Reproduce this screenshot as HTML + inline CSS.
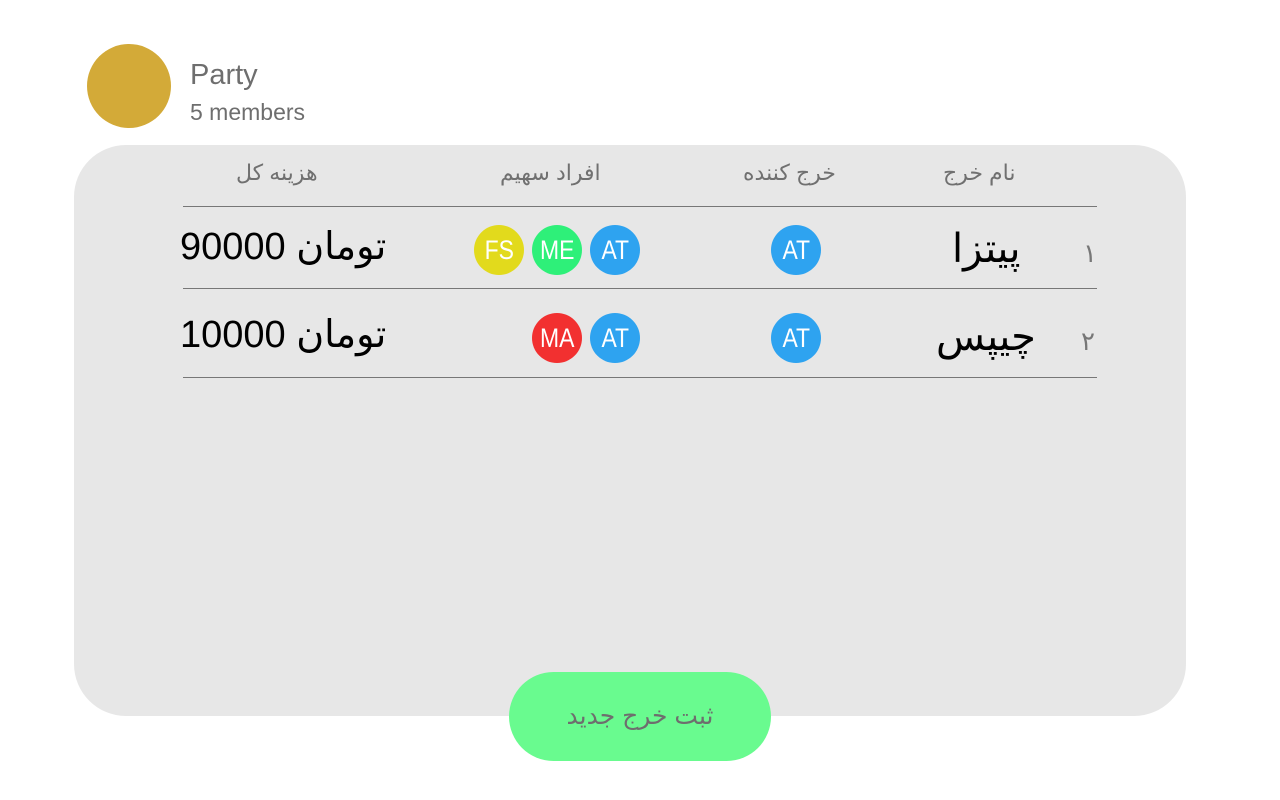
<!DOCTYPE html><html><head><meta charset="utf-8"><style>
body{margin:0;width:1280px;height:800px;background:#fff;position:relative;overflow:hidden;font-family:"Liberation Sans","DejaVu Sans",sans-serif}
.a{position:absolute}
.c{position:absolute;width:50px;height:50px;border-radius:50%;color:#fff;font-size:27px;line-height:50px;text-align:center}
.c span{display:inline-block;transform:scaleX(0.85)}
.h{position:absolute;top:160px;font-size:22px;color:#707070;white-space:nowrap;direction:rtl}
.line{position:absolute;left:183px;width:914px;height:1px;background:#777}
.t{position:absolute;font-size:38px;color:#000;white-space:nowrap;direction:rtl}
.n{position:absolute;font-size:26px;color:#777}
</style></head><body>
<div class="a" style="left:87px;top:44px;width:84px;height:84px;border-radius:50%;background:#d3aa38"></div>
<div class="a" style="left:190px;top:59px;font-size:29px;color:#6e6e6e">Party</div>
<div class="a" style="left:190px;top:99px;font-size:23px;color:#6e6e6e">5 members</div>
<div class="a" style="left:74px;top:145px;width:1112px;height:571px;border-radius:52px;background:#e7e7e7"></div>
<div class="h" style="left:236px">هزینه کل</div>
<div class="h" style="left:500px">افراد سهیم</div>
<div class="h" style="left:743px">خرج کننده</div>
<div class="h" style="left:943px">نام خرج</div>
<div class="line" style="top:206px"></div>
<div class="line" style="top:288px"></div>
<div class="line" style="top:377px"></div>
<div class="n" style="left:1083px;top:238px">١</div>
<div class="n" style="left:1081px;top:326px">٢</div>
<div class="t" style="left:952px;top:226px;font-size:40px">پیتزا</div>
<div class="t" style="left:936px;top:314px;font-size:40px">چیپس</div>
<div class="t" style="left:180px;top:224px">تومان 90000</div>
<div class="t" style="left:180px;top:312px">تومان 10000</div>
<div class="c" style="left:474px;top:225px;background:#e2da1c"><span>FS</span></div>
<div class="c" style="left:532px;top:225px;background:#2ef079"><span>ME</span></div>
<div class="c" style="left:590px;top:225px;background:#2ea3f0"><span>AT</span></div>
<div class="c" style="left:771px;top:225px;background:#2ea3f0"><span>AT</span></div>
<div class="c" style="left:532px;top:313px;background:#f23030"><span>MA</span></div>
<div class="c" style="left:590px;top:313px;background:#2ea3f0"><span>AT</span></div>
<div class="c" style="left:771px;top:313px;background:#2ea3f0"><span>AT</span></div>
<div class="a" style="left:509px;top:672px;width:262px;height:89px;border-radius:45px;background:#69fb8f;color:#6e6e6e;font-size:25px;line-height:89px;text-align:center;direction:rtl">ثبت خرج جدید</div>
</body></html>
